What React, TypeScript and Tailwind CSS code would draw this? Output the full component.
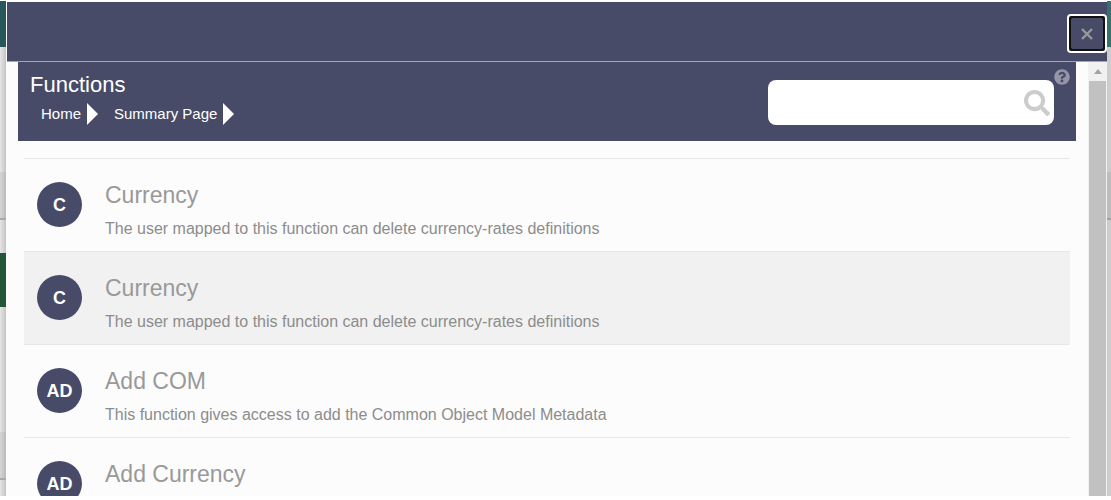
import { FaQuestionCircle, FaSearch } from "react-icons/fa";

type Item = { code: string; title: string; text: string };

const items: Item[] = [
  { code: "C", title: "Currency", text: "The user mapped to this function can delete currency-rates definitions" },
  { code: "C", title: "Currency", text: "The user mapped to this function can delete currency-rates definitions" },
  { code: "AD", title: "Add COM", text: "This function gives access to add the Common Object Model Metadata" },
  { code: "AD", title: "Add Currency", text: "" },
];

const crumbs = ["Home", "Summary Page"];

function LeftBackdrop() {
  return (
    <div className="flex w-1.5 shrink-0 flex-col bg-linear-to-r from-[#e6e6e6] to-[#c4c4c4]">
      <div className="h-[46px] shrink-0 bg-[#29555d]" />
      <div className="h-[125px] shrink-0" />
      <div className="h-12 shrink-0 border-b-2 border-[#a8a8a8] bg-linear-to-r from-[#d6d6d6] to-[#bababa]" />
      <div className="h-[33px] shrink-0" />
      <div className="h-[54px] shrink-0 bg-[#245539]" />
      <div className="h-[125px] shrink-0" />
      <div className="h-12 shrink-0 border-b-2 border-[#a8a8a8] bg-linear-to-r from-[#d6d6d6] to-[#bababa]" />
    </div>
  );
}

function RightBackdrop() {
  return (
    <div className="flex w-1 shrink-0 flex-col bg-[#cdcdcd]">
      <div className="h-[46px] shrink-0 bg-[#35726e]" />
      <div className="h-[125px] shrink-0" />
      <div className="h-12 shrink-0 border-b-2 border-[#a0a0a0] bg-[#bdbdbd]" />
    </div>
  );
}

function Row({ item, active }: { item: Item; active: boolean }) {
  return (
    <li className={`flex h-[93px] shrink-0 border-t border-[#e7e7e7] pl-[13px] pt-[23px] ${active ? "bg-[#f1f1f1]" : ""}`}>
      <span className="flex size-[45px] shrink-0 items-center justify-center rounded-full bg-[#474b67] text-lg font-bold text-white">
        {item.code}
      </span>
      <div className="ml-[23px] text-[#999999]">
        <h2 className="text-[23px] leading-[26px]">{item.title}</h2>
        <p className="mt-[11px] text-base leading-5 text-[#8c8c8c]">{item.text}</p>
      </div>
    </li>
  );
}

export default function App() {
  return (
    <div className="flex h-screen overflow-hidden bg-white pb-1 pt-px font-['Liberation_Sans',Arial,sans-serif]">
      <LeftBackdrop />
      <div role="dialog" aria-label="Functions" className="flex min-w-0 flex-1 flex-col bg-[#fcfcfc]">
        <div className="ml-px mt-px flex h-[60px] shrink-0 items-start justify-end border-b border-[#a3a5b3] bg-[#474b67] pt-3">
          <button
            type="button"
            aria-label="Close"
            className="flex h-[39px] w-10 items-center justify-center rounded border-2 border-white bg-[#111111]"
          >
            <span className="flex h-[31px] w-8 items-center justify-center rounded-xs bg-[#474b67]">
              <svg viewBox="0 0 12 12" className="size-3" fill="none" stroke="#99999a" strokeWidth="2.4">
                <path d="M1 1 L11 11 M11 1 L1 11" />
              </svg>
            </span>
          </button>
        </div>
        <div className="flex min-h-0 flex-1">
          <main className="flex min-w-0 flex-1 flex-col overflow-hidden px-3">
            <header className="flex h-[79px] shrink-0 justify-between bg-[#474b67] pl-3 pr-1.5 text-white">
              <div className="pt-2.5">
                <h1 className="text-[22px] leading-[26px]">Functions</h1>
                <nav aria-label="Breadcrumb" className="mt-1 flex gap-4 pl-[11px]">
                  {crumbs.map((c) => (
                    <a key={c} href="#" className="flex items-center gap-1.5 text-[15px] leading-6">
                      {c}
                      <svg viewBox="0 0 11 22" className="h-[22px] w-[11px]" fill="#ffffff">
                        <path d="M0 0 L11 11 L0 22 Z" />
                      </svg>
                    </a>
                  ))}
                </nav>
              </div>
              <div className="flex items-start">
                <label className="mt-[18px] flex h-[45px] w-[286px] items-center rounded-lg bg-white pr-1">
                  <input type="text" aria-label="Search functions" className="h-full min-w-0 flex-1 bg-transparent px-3 text-base text-[#555555] outline-none" />
                  <FaSearch className="size-[26px] text-[#cccccc]" />
                </label>
                <FaQuestionCircle className="mt-[7px] size-4 text-[#9495a8]" />
              </div>
            </header>
            <ul className="mx-1.5 mt-[17px] flex flex-col">
              {items.map((item, i) => (
                <Row key={i} item={item} active={i === 1} />
              ))}
            </ul>
          </main>
          <div aria-hidden="true" className="flex w-[19px] shrink-0 flex-col bg-[#f1f1f1] px-px">
            <div className="flex h-[19px] shrink-0 items-center justify-center">
              <svg viewBox="0 0 8 5" className="h-[5px] w-2" fill="#a3a3a3">
                <path d="M4 0 L8 5 H0 Z" />
              </svg>
            </div>
            <div className="flex-1 bg-[#c1c1c1]" />
          </div>
        </div>
      </div>
      <RightBackdrop />
    </div>
  );
}
